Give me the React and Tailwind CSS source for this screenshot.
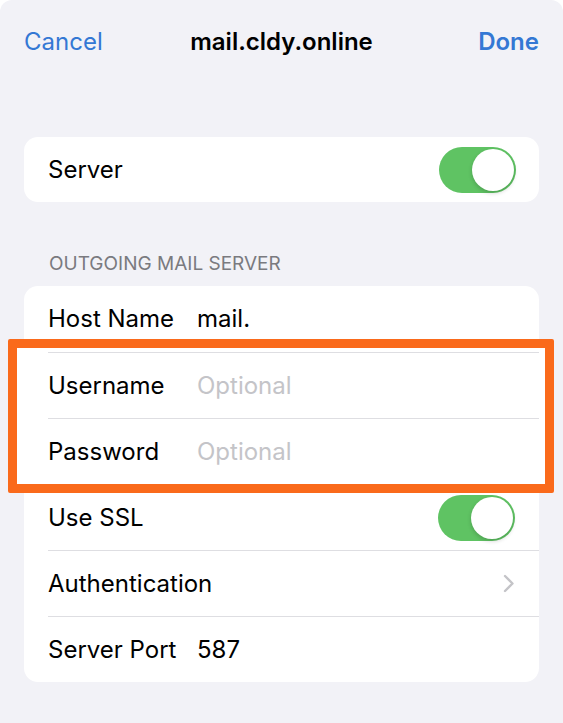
import React from "react";

const font = { fontFamily: "Inter, 'Noto Sans', sans-serif" };

function Toggle() {
    return (
        <div className="relative w-[77px] h-[46px] rounded-full bg-[#5fc363] shrink-0">
            <div className="absolute right-[2px] top-[2px] w-[42px] h-[42px] rounded-full bg-white shadow-[0_2px_4px_rgba(0,0,0,0.18)]" />
        </div>
    );
}

function Chevron() {
    return (
        <svg width="13" height="19" viewBox="0 0 13 19" className="shrink-0">
            <path d="M3 2 L10.5 9.5 L3 17" fill="none" stroke="#c4c4c8" strokeWidth="2.4" strokeLinecap="round" strokeLinejoin="round" />
        </svg>
    );
}

function Row({ label, value, placeholder, first, right, raised }) {
    return (
        <div className={"pl-[24px] h-[66px] " + (raised ? "relative z-10" : "")}>
            <div className={"h-full flex items-center pr-[24px] " + (first ? "" : "border-t border-[#dedee2]")}>
                <span className="w-[149px] shrink-0 text-[24px] text-black">{label}</span>
                {value && <span className="text-[24px] text-black">{value}</span>}
                {placeholder && <span className="text-[24px] text-[#c4c4c8]">{placeholder}</span>}
                {right && <div className="ml-auto flex items-center">{right}</div>}
            </div>
        </div>
    );
}

export default function App() {
    return (
        <div className="w-[563px] h-[723px] bg-white overflow-hidden" style={font}>
            <div className="h-full rounded-t-[12px] bg-[#f2f2f7]">
                <div className="h-[84px] px-[24px] grid grid-cols-[1fr_auto_1fr] items-center">
                    <span className="text-[24px] text-[#3478d4]">Cancel</span>
                    <span className="text-[24px] font-semibold text-black">mail.cldy.online</span>
                    <span className="text-[24px] font-semibold text-[#3478d4] justify-self-end">Done</span>
                </div>

                <div className="px-[24px] pt-[53px]">
                    <div className="bg-white rounded-[14px] h-[65px] pl-[24px] pr-[23px] flex items-center justify-between">
                        <span className="text-[24px] text-black">Server</span>
                        <Toggle />
                    </div>

                    <div className="mt-[51px] mb-[11px] px-[25px] h-[22px] flex items-center text-[19px] text-[#7a7a7f] uppercase">
                        Outgoing Mail Server
                    </div>

                    <div className="relative bg-white rounded-[14px]">
                        <Row label="Host Name" value="mail." first />
                        <Row label="Username" placeholder="Optional" raised />
                        <Row label="Password" placeholder="Optional" raised />
                        <Row label="Use SSL" right={<Toggle />} />
                        <Row label="Authentication" right={<Chevron />} />
                        <Row label="Server Port" value="587" />

                        <div className="absolute left-[-16px] right-[-15px] top-[53px] h-[154px] border-[9px] border-[#fa6a1b] bg-white rounded-[2px] pointer-events-none" />
                    </div>
                </div>
            </div>
        </div>
    );
}
